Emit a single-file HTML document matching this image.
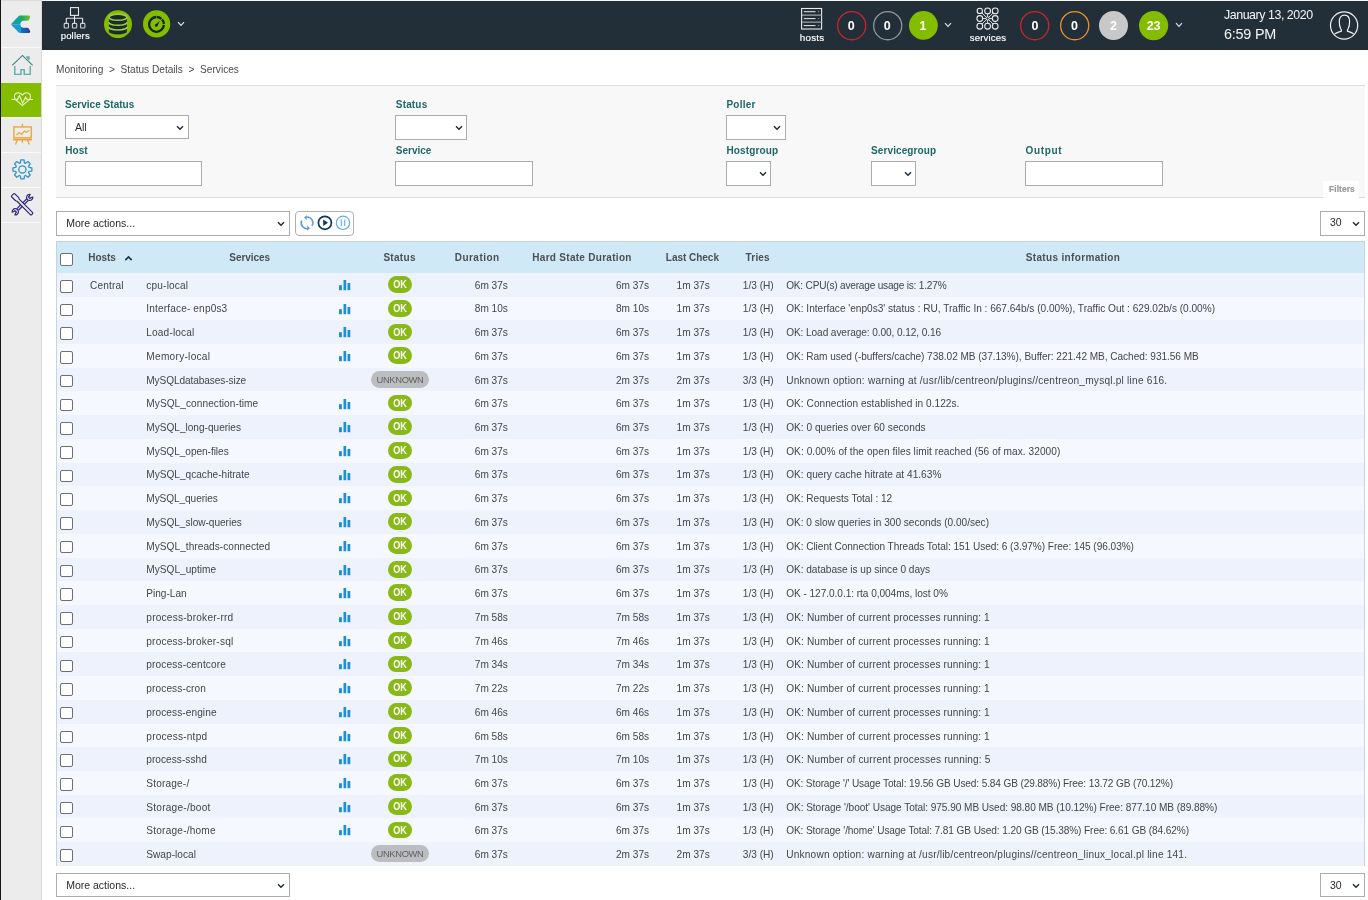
<!DOCTYPE html><html><head><meta charset="utf-8"><style>
html,body{margin:0;padding:0;width:1368px;height:900px;overflow:hidden;background:#fff;font-family:"Liberation Sans", sans-serif;}
.t{position:absolute;white-space:pre;line-height:1;}
.b{position:absolute;}
#tl{position:absolute;left:0;top:0;width:1368px;height:900px;will-change:transform;}
</style></head><body>
<div class="b" style="left:0.00px;top:0.00px;width:1.00px;height:900.00px;background:#161616;"></div>
<div class="b" style="left:1.00px;top:0.00px;width:40.00px;height:900.00px;background:#ececec;"></div>
<div class="b" style="left:41.00px;top:0.00px;width:1.00px;height:900.00px;background:#dadada;"></div>
<div class="b" style="left:1.00px;top:0.00px;width:40.00px;height:1.00px;background:#dcdcdc;"></div>
<div class="b" style="left:2.00px;top:47.00px;width:39.00px;height:1.00px;background:#fafafa;"></div>
<div class="b" style="left:2.00px;top:82.50px;width:39.00px;height:1.00px;background:#fafafa;"></div>
<div class="b" style="left:2.00px;top:117.00px;width:39.00px;height:1.00px;background:#fafafa;"></div>
<div class="b" style="left:2.00px;top:152.30px;width:39.00px;height:1.00px;background:#fafafa;"></div>
<div class="b" style="left:2.00px;top:187.30px;width:39.00px;height:1.00px;background:#fafafa;"></div>
<div class="b" style="left:2.00px;top:222.30px;width:39.00px;height:1.00px;background:#fafafa;"></div>
<div class="b" style="left:1.00px;top:83.00px;width:40.00px;height:33.80px;background:#84bd00;"></div>
<div class="b" style="left:42.00px;top:0.00px;width:1326.00px;height:1.00px;background:#f4f6f8;"></div>
<div class="b" style="left:42.00px;top:1.00px;width:1326.00px;height:49.00px;background:#232f38;"></div>
<div class="b" style="left:56.00px;top:85.00px;width:1309.00px;height:113.00px;background:#f8f8f8;border-top:1px solid #dcdcdc;border-bottom:1px solid #dcdcdc;box-sizing:border-box;"></div>
<div class="b" style="left:65.30px;top:115.20px;width:123.30px;height:24.30px;background:#fff;border:1px solid #acacac;box-sizing:border-box;"></div>
<svg class="b" style="left:176.30px;top:124.65px" width="8" height="6" viewBox="0 0 8 6"><path d="M1 1.2 L4 4.3 L7 1.2" fill="none" stroke="#1d2a44" stroke-width="1.4"/></svg>
<div class="b" style="left:395.10px;top:115.00px;width:71.70px;height:24.70px;background:#fff;border:1px solid #acacac;box-sizing:border-box;"></div>
<svg class="b" style="left:454.50px;top:124.65px" width="8" height="6" viewBox="0 0 8 6"><path d="M1 1.2 L4 4.3 L7 1.2" fill="none" stroke="#1d2a44" stroke-width="1.4"/></svg>
<div class="b" style="left:726.00px;top:115.10px;width:59.70px;height:24.50px;background:#fff;border:1px solid #acacac;box-sizing:border-box;"></div>
<svg class="b" style="left:773.40px;top:124.65px" width="8" height="6" viewBox="0 0 8 6"><path d="M1 1.2 L4 4.3 L7 1.2" fill="none" stroke="#1d2a44" stroke-width="1.4"/></svg>
<div class="b" style="left:65.30px;top:161.20px;width:136.40px;height:24.40px;background:#fff;border:1px solid #acacac;box-sizing:border-box;"></div>
<div class="b" style="left:395.10px;top:161.00px;width:137.80px;height:24.70px;background:#fff;border:1px solid #acacac;box-sizing:border-box;"></div>
<div class="b" style="left:726.00px;top:161.00px;width:44.80px;height:24.60px;background:#fff;border:1px solid #acacac;box-sizing:border-box;"></div>
<svg class="b" style="left:758.50px;top:170.60px" width="8" height="6" viewBox="0 0 8 6"><path d="M1 1.2 L4 4.3 L7 1.2" fill="none" stroke="#1d2a44" stroke-width="1.4"/></svg>
<div class="b" style="left:871.10px;top:161.00px;width:44.80px;height:24.60px;background:#fff;border:1px solid #acacac;box-sizing:border-box;"></div>
<svg class="b" style="left:903.60px;top:170.60px" width="8" height="6" viewBox="0 0 8 6"><path d="M1 1.2 L4 4.3 L7 1.2" fill="none" stroke="#1d2a44" stroke-width="1.4"/></svg>
<div class="b" style="left:1025.20px;top:161.10px;width:137.70px;height:24.60px;background:#fff;border:1px solid #acacac;box-sizing:border-box;"></div>
<div class="b" style="left:1323.00px;top:181.00px;width:36.00px;height:17.00px;background:#fff;"></div>
<div class="b" style="left:56.00px;top:211.00px;width:233.60px;height:24.60px;background:#fff;border:1px solid #acacac;box-sizing:border-box;"></div>
<svg class="b" style="left:277.30px;top:220.60px" width="8" height="6" viewBox="0 0 8 6"><path d="M1 1.2 L4 4.3 L7 1.2" fill="none" stroke="#1d2a44" stroke-width="1.4"/></svg>
<div class="b" style="left:295.30px;top:211.25px;width:58.45px;height:24.35px;background:#fff;border:1px solid #b0b0b0;border-radius:4px;box-sizing:border-box;"></div>
<div class="b" style="left:1320.30px;top:211.30px;width:44.40px;height:24.40px;background:#fff;border:1px solid #acacac;box-sizing:border-box;"></div>
<svg class="b" style="left:1352.40px;top:220.80px" width="8" height="6" viewBox="0 0 8 6"><path d="M1 1.2 L4 4.3 L7 1.2" fill="none" stroke="#1d2a44" stroke-width="1.4"/></svg>
<div class="b" style="left:56.00px;top:241.20px;width:1308.70px;height:625.10px;border:1px solid #c9d3dc;box-sizing:border-box;background:#f6f8fd;"></div>
<div class="b" style="left:57.00px;top:242.20px;width:1306.70px;height:30.70px;background:#cfeaf6;"></div>
<div class="b" style="left:60.20px;top:253.00px;width:13.00px;height:12.50px;background:#fff;border:1px solid #6f6f6f;border-radius:2px;box-sizing:border-box;"></div>
<svg class="b" style="left:123.5px;top:254.5px" width="9" height="7" viewBox="0 0 9 7"><path d="M1.3 5.2 L4.5 2 L7.7 5.2" fill="none" stroke="#1d3550" stroke-width="1.7"/></svg>
<div class="b" style="left:57.00px;top:272.90px;width:1306.70px;height:23.72px;background:#edf2fc;"></div>
<div class="b" style="left:60.20px;top:280.00px;width:13.00px;height:12.50px;background:#fff;border:1px solid #6f6f6f;border-radius:2px;box-sizing:border-box;"></div>
<svg class="b" style="left:338.8px;top:279.90px" width="12" height="11" viewBox="0 0 12 11"><rect x="0" y="5.2" width="2.9" height="5" fill="#1e8fd2"/><rect x="4.5" y="0" width="2.7" height="10.2" fill="#1e8fd2"/><rect x="8.5" y="3" width="2.8" height="7.2" fill="#1e8fd2"/></svg>
<div class="b" style="left:387.90px;top:276.10px;width:24.10px;height:16.80px;background:#88b917;border-radius:9px;"></div>
<div class="b" style="left:57.00px;top:296.62px;width:1306.70px;height:23.72px;background:#f5f8fe;"></div>
<div class="b" style="left:60.20px;top:303.72px;width:13.00px;height:12.50px;background:#fff;border:1px solid #6f6f6f;border-radius:2px;box-sizing:border-box;"></div>
<svg class="b" style="left:338.8px;top:303.62px" width="12" height="11" viewBox="0 0 12 11"><rect x="0" y="5.2" width="2.9" height="5" fill="#1e8fd2"/><rect x="4.5" y="0" width="2.7" height="10.2" fill="#1e8fd2"/><rect x="8.5" y="3" width="2.8" height="7.2" fill="#1e8fd2"/></svg>
<div class="b" style="left:387.90px;top:299.82px;width:24.10px;height:16.80px;background:#88b917;border-radius:9px;"></div>
<div class="b" style="left:57.00px;top:320.34px;width:1306.70px;height:23.72px;background:#edf2fc;"></div>
<div class="b" style="left:60.20px;top:327.44px;width:13.00px;height:12.50px;background:#fff;border:1px solid #6f6f6f;border-radius:2px;box-sizing:border-box;"></div>
<svg class="b" style="left:338.8px;top:327.34px" width="12" height="11" viewBox="0 0 12 11"><rect x="0" y="5.2" width="2.9" height="5" fill="#1e8fd2"/><rect x="4.5" y="0" width="2.7" height="10.2" fill="#1e8fd2"/><rect x="8.5" y="3" width="2.8" height="7.2" fill="#1e8fd2"/></svg>
<div class="b" style="left:387.90px;top:323.54px;width:24.10px;height:16.80px;background:#88b917;border-radius:9px;"></div>
<div class="b" style="left:57.00px;top:344.06px;width:1306.70px;height:23.72px;background:#f5f8fe;"></div>
<div class="b" style="left:60.20px;top:351.16px;width:13.00px;height:12.50px;background:#fff;border:1px solid #6f6f6f;border-radius:2px;box-sizing:border-box;"></div>
<svg class="b" style="left:338.8px;top:351.06px" width="12" height="11" viewBox="0 0 12 11"><rect x="0" y="5.2" width="2.9" height="5" fill="#1e8fd2"/><rect x="4.5" y="0" width="2.7" height="10.2" fill="#1e8fd2"/><rect x="8.5" y="3" width="2.8" height="7.2" fill="#1e8fd2"/></svg>
<div class="b" style="left:387.90px;top:347.26px;width:24.10px;height:16.80px;background:#88b917;border-radius:9px;"></div>
<div class="b" style="left:57.00px;top:367.78px;width:1306.70px;height:23.72px;background:#edf2fc;"></div>
<div class="b" style="left:60.20px;top:374.88px;width:13.00px;height:12.50px;background:#fff;border:1px solid #6f6f6f;border-radius:2px;box-sizing:border-box;"></div>
<div class="b" style="left:370.80px;top:370.98px;width:58.10px;height:16.80px;background:#bcbdc0;border-radius:9px;"></div>
<div class="b" style="left:57.00px;top:391.50px;width:1306.70px;height:23.72px;background:#f5f8fe;"></div>
<div class="b" style="left:60.20px;top:398.60px;width:13.00px;height:12.50px;background:#fff;border:1px solid #6f6f6f;border-radius:2px;box-sizing:border-box;"></div>
<svg class="b" style="left:338.8px;top:398.50px" width="12" height="11" viewBox="0 0 12 11"><rect x="0" y="5.2" width="2.9" height="5" fill="#1e8fd2"/><rect x="4.5" y="0" width="2.7" height="10.2" fill="#1e8fd2"/><rect x="8.5" y="3" width="2.8" height="7.2" fill="#1e8fd2"/></svg>
<div class="b" style="left:387.90px;top:394.70px;width:24.10px;height:16.80px;background:#88b917;border-radius:9px;"></div>
<div class="b" style="left:57.00px;top:415.22px;width:1306.70px;height:23.72px;background:#edf2fc;"></div>
<div class="b" style="left:60.20px;top:422.32px;width:13.00px;height:12.50px;background:#fff;border:1px solid #6f6f6f;border-radius:2px;box-sizing:border-box;"></div>
<svg class="b" style="left:338.8px;top:422.22px" width="12" height="11" viewBox="0 0 12 11"><rect x="0" y="5.2" width="2.9" height="5" fill="#1e8fd2"/><rect x="4.5" y="0" width="2.7" height="10.2" fill="#1e8fd2"/><rect x="8.5" y="3" width="2.8" height="7.2" fill="#1e8fd2"/></svg>
<div class="b" style="left:387.90px;top:418.42px;width:24.10px;height:16.80px;background:#88b917;border-radius:9px;"></div>
<div class="b" style="left:57.00px;top:438.94px;width:1306.70px;height:23.72px;background:#f5f8fe;"></div>
<div class="b" style="left:60.20px;top:446.04px;width:13.00px;height:12.50px;background:#fff;border:1px solid #6f6f6f;border-radius:2px;box-sizing:border-box;"></div>
<svg class="b" style="left:338.8px;top:445.94px" width="12" height="11" viewBox="0 0 12 11"><rect x="0" y="5.2" width="2.9" height="5" fill="#1e8fd2"/><rect x="4.5" y="0" width="2.7" height="10.2" fill="#1e8fd2"/><rect x="8.5" y="3" width="2.8" height="7.2" fill="#1e8fd2"/></svg>
<div class="b" style="left:387.90px;top:442.14px;width:24.10px;height:16.80px;background:#88b917;border-radius:9px;"></div>
<div class="b" style="left:57.00px;top:462.66px;width:1306.70px;height:23.72px;background:#edf2fc;"></div>
<div class="b" style="left:60.20px;top:469.76px;width:13.00px;height:12.50px;background:#fff;border:1px solid #6f6f6f;border-radius:2px;box-sizing:border-box;"></div>
<svg class="b" style="left:338.8px;top:469.66px" width="12" height="11" viewBox="0 0 12 11"><rect x="0" y="5.2" width="2.9" height="5" fill="#1e8fd2"/><rect x="4.5" y="0" width="2.7" height="10.2" fill="#1e8fd2"/><rect x="8.5" y="3" width="2.8" height="7.2" fill="#1e8fd2"/></svg>
<div class="b" style="left:387.90px;top:465.86px;width:24.10px;height:16.80px;background:#88b917;border-radius:9px;"></div>
<div class="b" style="left:57.00px;top:486.38px;width:1306.70px;height:23.72px;background:#f5f8fe;"></div>
<div class="b" style="left:60.20px;top:493.48px;width:13.00px;height:12.50px;background:#fff;border:1px solid #6f6f6f;border-radius:2px;box-sizing:border-box;"></div>
<svg class="b" style="left:338.8px;top:493.38px" width="12" height="11" viewBox="0 0 12 11"><rect x="0" y="5.2" width="2.9" height="5" fill="#1e8fd2"/><rect x="4.5" y="0" width="2.7" height="10.2" fill="#1e8fd2"/><rect x="8.5" y="3" width="2.8" height="7.2" fill="#1e8fd2"/></svg>
<div class="b" style="left:387.90px;top:489.58px;width:24.10px;height:16.80px;background:#88b917;border-radius:9px;"></div>
<div class="b" style="left:57.00px;top:510.10px;width:1306.70px;height:23.72px;background:#edf2fc;"></div>
<div class="b" style="left:60.20px;top:517.20px;width:13.00px;height:12.50px;background:#fff;border:1px solid #6f6f6f;border-radius:2px;box-sizing:border-box;"></div>
<svg class="b" style="left:338.8px;top:517.10px" width="12" height="11" viewBox="0 0 12 11"><rect x="0" y="5.2" width="2.9" height="5" fill="#1e8fd2"/><rect x="4.5" y="0" width="2.7" height="10.2" fill="#1e8fd2"/><rect x="8.5" y="3" width="2.8" height="7.2" fill="#1e8fd2"/></svg>
<div class="b" style="left:387.90px;top:513.30px;width:24.10px;height:16.80px;background:#88b917;border-radius:9px;"></div>
<div class="b" style="left:57.00px;top:533.82px;width:1306.70px;height:23.72px;background:#f5f8fe;"></div>
<div class="b" style="left:60.20px;top:540.92px;width:13.00px;height:12.50px;background:#fff;border:1px solid #6f6f6f;border-radius:2px;box-sizing:border-box;"></div>
<svg class="b" style="left:338.8px;top:540.82px" width="12" height="11" viewBox="0 0 12 11"><rect x="0" y="5.2" width="2.9" height="5" fill="#1e8fd2"/><rect x="4.5" y="0" width="2.7" height="10.2" fill="#1e8fd2"/><rect x="8.5" y="3" width="2.8" height="7.2" fill="#1e8fd2"/></svg>
<div class="b" style="left:387.90px;top:537.02px;width:24.10px;height:16.80px;background:#88b917;border-radius:9px;"></div>
<div class="b" style="left:57.00px;top:557.54px;width:1306.70px;height:23.72px;background:#edf2fc;"></div>
<div class="b" style="left:60.20px;top:564.64px;width:13.00px;height:12.50px;background:#fff;border:1px solid #6f6f6f;border-radius:2px;box-sizing:border-box;"></div>
<svg class="b" style="left:338.8px;top:564.54px" width="12" height="11" viewBox="0 0 12 11"><rect x="0" y="5.2" width="2.9" height="5" fill="#1e8fd2"/><rect x="4.5" y="0" width="2.7" height="10.2" fill="#1e8fd2"/><rect x="8.5" y="3" width="2.8" height="7.2" fill="#1e8fd2"/></svg>
<div class="b" style="left:387.90px;top:560.74px;width:24.10px;height:16.80px;background:#88b917;border-radius:9px;"></div>
<div class="b" style="left:57.00px;top:581.26px;width:1306.70px;height:23.72px;background:#f5f8fe;"></div>
<div class="b" style="left:60.20px;top:588.36px;width:13.00px;height:12.50px;background:#fff;border:1px solid #6f6f6f;border-radius:2px;box-sizing:border-box;"></div>
<svg class="b" style="left:338.8px;top:588.26px" width="12" height="11" viewBox="0 0 12 11"><rect x="0" y="5.2" width="2.9" height="5" fill="#1e8fd2"/><rect x="4.5" y="0" width="2.7" height="10.2" fill="#1e8fd2"/><rect x="8.5" y="3" width="2.8" height="7.2" fill="#1e8fd2"/></svg>
<div class="b" style="left:387.90px;top:584.46px;width:24.10px;height:16.80px;background:#88b917;border-radius:9px;"></div>
<div class="b" style="left:57.00px;top:604.98px;width:1306.70px;height:23.72px;background:#edf2fc;"></div>
<div class="b" style="left:60.20px;top:612.08px;width:13.00px;height:12.50px;background:#fff;border:1px solid #6f6f6f;border-radius:2px;box-sizing:border-box;"></div>
<svg class="b" style="left:338.8px;top:611.98px" width="12" height="11" viewBox="0 0 12 11"><rect x="0" y="5.2" width="2.9" height="5" fill="#1e8fd2"/><rect x="4.5" y="0" width="2.7" height="10.2" fill="#1e8fd2"/><rect x="8.5" y="3" width="2.8" height="7.2" fill="#1e8fd2"/></svg>
<div class="b" style="left:387.90px;top:608.18px;width:24.10px;height:16.80px;background:#88b917;border-radius:9px;"></div>
<div class="b" style="left:57.00px;top:628.70px;width:1306.70px;height:23.72px;background:#f5f8fe;"></div>
<div class="b" style="left:60.20px;top:635.80px;width:13.00px;height:12.50px;background:#fff;border:1px solid #6f6f6f;border-radius:2px;box-sizing:border-box;"></div>
<svg class="b" style="left:338.8px;top:635.70px" width="12" height="11" viewBox="0 0 12 11"><rect x="0" y="5.2" width="2.9" height="5" fill="#1e8fd2"/><rect x="4.5" y="0" width="2.7" height="10.2" fill="#1e8fd2"/><rect x="8.5" y="3" width="2.8" height="7.2" fill="#1e8fd2"/></svg>
<div class="b" style="left:387.90px;top:631.90px;width:24.10px;height:16.80px;background:#88b917;border-radius:9px;"></div>
<div class="b" style="left:57.00px;top:652.42px;width:1306.70px;height:23.72px;background:#edf2fc;"></div>
<div class="b" style="left:60.20px;top:659.52px;width:13.00px;height:12.50px;background:#fff;border:1px solid #6f6f6f;border-radius:2px;box-sizing:border-box;"></div>
<svg class="b" style="left:338.8px;top:659.42px" width="12" height="11" viewBox="0 0 12 11"><rect x="0" y="5.2" width="2.9" height="5" fill="#1e8fd2"/><rect x="4.5" y="0" width="2.7" height="10.2" fill="#1e8fd2"/><rect x="8.5" y="3" width="2.8" height="7.2" fill="#1e8fd2"/></svg>
<div class="b" style="left:387.90px;top:655.62px;width:24.10px;height:16.80px;background:#88b917;border-radius:9px;"></div>
<div class="b" style="left:57.00px;top:676.14px;width:1306.70px;height:23.72px;background:#f5f8fe;"></div>
<div class="b" style="left:60.20px;top:683.24px;width:13.00px;height:12.50px;background:#fff;border:1px solid #6f6f6f;border-radius:2px;box-sizing:border-box;"></div>
<svg class="b" style="left:338.8px;top:683.14px" width="12" height="11" viewBox="0 0 12 11"><rect x="0" y="5.2" width="2.9" height="5" fill="#1e8fd2"/><rect x="4.5" y="0" width="2.7" height="10.2" fill="#1e8fd2"/><rect x="8.5" y="3" width="2.8" height="7.2" fill="#1e8fd2"/></svg>
<div class="b" style="left:387.90px;top:679.34px;width:24.10px;height:16.80px;background:#88b917;border-radius:9px;"></div>
<div class="b" style="left:57.00px;top:699.86px;width:1306.70px;height:23.72px;background:#edf2fc;"></div>
<div class="b" style="left:60.20px;top:706.96px;width:13.00px;height:12.50px;background:#fff;border:1px solid #6f6f6f;border-radius:2px;box-sizing:border-box;"></div>
<svg class="b" style="left:338.8px;top:706.86px" width="12" height="11" viewBox="0 0 12 11"><rect x="0" y="5.2" width="2.9" height="5" fill="#1e8fd2"/><rect x="4.5" y="0" width="2.7" height="10.2" fill="#1e8fd2"/><rect x="8.5" y="3" width="2.8" height="7.2" fill="#1e8fd2"/></svg>
<div class="b" style="left:387.90px;top:703.06px;width:24.10px;height:16.80px;background:#88b917;border-radius:9px;"></div>
<div class="b" style="left:57.00px;top:723.58px;width:1306.70px;height:23.72px;background:#f5f8fe;"></div>
<div class="b" style="left:60.20px;top:730.68px;width:13.00px;height:12.50px;background:#fff;border:1px solid #6f6f6f;border-radius:2px;box-sizing:border-box;"></div>
<svg class="b" style="left:338.8px;top:730.58px" width="12" height="11" viewBox="0 0 12 11"><rect x="0" y="5.2" width="2.9" height="5" fill="#1e8fd2"/><rect x="4.5" y="0" width="2.7" height="10.2" fill="#1e8fd2"/><rect x="8.5" y="3" width="2.8" height="7.2" fill="#1e8fd2"/></svg>
<div class="b" style="left:387.90px;top:726.78px;width:24.10px;height:16.80px;background:#88b917;border-radius:9px;"></div>
<div class="b" style="left:57.00px;top:747.30px;width:1306.70px;height:23.72px;background:#edf2fc;"></div>
<div class="b" style="left:60.20px;top:754.40px;width:13.00px;height:12.50px;background:#fff;border:1px solid #6f6f6f;border-radius:2px;box-sizing:border-box;"></div>
<svg class="b" style="left:338.8px;top:754.30px" width="12" height="11" viewBox="0 0 12 11"><rect x="0" y="5.2" width="2.9" height="5" fill="#1e8fd2"/><rect x="4.5" y="0" width="2.7" height="10.2" fill="#1e8fd2"/><rect x="8.5" y="3" width="2.8" height="7.2" fill="#1e8fd2"/></svg>
<div class="b" style="left:387.90px;top:750.50px;width:24.10px;height:16.80px;background:#88b917;border-radius:9px;"></div>
<div class="b" style="left:57.00px;top:771.02px;width:1306.70px;height:23.72px;background:#f5f8fe;"></div>
<div class="b" style="left:60.20px;top:778.12px;width:13.00px;height:12.50px;background:#fff;border:1px solid #6f6f6f;border-radius:2px;box-sizing:border-box;"></div>
<svg class="b" style="left:338.8px;top:778.02px" width="12" height="11" viewBox="0 0 12 11"><rect x="0" y="5.2" width="2.9" height="5" fill="#1e8fd2"/><rect x="4.5" y="0" width="2.7" height="10.2" fill="#1e8fd2"/><rect x="8.5" y="3" width="2.8" height="7.2" fill="#1e8fd2"/></svg>
<div class="b" style="left:387.90px;top:774.22px;width:24.10px;height:16.80px;background:#88b917;border-radius:9px;"></div>
<div class="b" style="left:57.00px;top:794.74px;width:1306.70px;height:23.72px;background:#edf2fc;"></div>
<div class="b" style="left:60.20px;top:801.84px;width:13.00px;height:12.50px;background:#fff;border:1px solid #6f6f6f;border-radius:2px;box-sizing:border-box;"></div>
<svg class="b" style="left:338.8px;top:801.74px" width="12" height="11" viewBox="0 0 12 11"><rect x="0" y="5.2" width="2.9" height="5" fill="#1e8fd2"/><rect x="4.5" y="0" width="2.7" height="10.2" fill="#1e8fd2"/><rect x="8.5" y="3" width="2.8" height="7.2" fill="#1e8fd2"/></svg>
<div class="b" style="left:387.90px;top:797.94px;width:24.10px;height:16.80px;background:#88b917;border-radius:9px;"></div>
<div class="b" style="left:57.00px;top:818.46px;width:1306.70px;height:23.72px;background:#f5f8fe;"></div>
<div class="b" style="left:60.20px;top:825.56px;width:13.00px;height:12.50px;background:#fff;border:1px solid #6f6f6f;border-radius:2px;box-sizing:border-box;"></div>
<svg class="b" style="left:338.8px;top:825.46px" width="12" height="11" viewBox="0 0 12 11"><rect x="0" y="5.2" width="2.9" height="5" fill="#1e8fd2"/><rect x="4.5" y="0" width="2.7" height="10.2" fill="#1e8fd2"/><rect x="8.5" y="3" width="2.8" height="7.2" fill="#1e8fd2"/></svg>
<div class="b" style="left:387.90px;top:821.66px;width:24.10px;height:16.80px;background:#88b917;border-radius:9px;"></div>
<div class="b" style="left:57.00px;top:842.18px;width:1306.70px;height:23.72px;background:#edf2fc;"></div>
<div class="b" style="left:60.20px;top:849.28px;width:13.00px;height:12.50px;background:#fff;border:1px solid #6f6f6f;border-radius:2px;box-sizing:border-box;"></div>
<div class="b" style="left:370.80px;top:845.38px;width:58.10px;height:16.80px;background:#bcbdc0;border-radius:9px;"></div>
<div class="b" style="left:56.00px;top:873.30px;width:233.60px;height:24.20px;background:#fff;border:1px solid #acacac;box-sizing:border-box;"></div>
<svg class="b" style="left:277.30px;top:882.70px" width="8" height="6" viewBox="0 0 8 6"><path d="M1 1.2 L4 4.3 L7 1.2" fill="none" stroke="#1d2a44" stroke-width="1.4"/></svg>
<div class="b" style="left:1320.30px;top:873.30px;width:44.40px;height:24.20px;background:#fff;border:1px solid #acacac;box-sizing:border-box;"></div>
<svg class="b" style="left:1352.40px;top:882.70px" width="8" height="6" viewBox="0 0 8 6"><path d="M1 1.2 L4 4.3 L7 1.2" fill="none" stroke="#1d2a44" stroke-width="1.4"/></svg>
<svg class="b" style="left:60px;top:4px" width="30" height="28" viewBox="60 4 30 28">
<rect x="70.5" y="7.6" width="8" height="7.8" fill="none" stroke="#e6e8ea" stroke-width="1.1"/>
<path d="M74.5 15.4 V18.3 M66.3 18.3 H82.6 M66.3 18.3 V23.2 M74.5 18.3 V23.2 M82.6 18.3 V23.2" fill="none" stroke="#e6e8ea" stroke-width="1.1"/>
<rect x="64.2" y="23.4" width="4.3" height="4.6" rx="0.8" fill="none" stroke="#cfd3d6" stroke-width="1.1"/>
<rect x="72.4" y="23.4" width="4.3" height="4.6" rx="0.8" fill="none" stroke="#cfd3d6" stroke-width="1.1"/>
<rect x="80.6" y="23.4" width="4.3" height="4.6" rx="0.8" fill="none" stroke="#cfd3d6" stroke-width="1.1"/>
</svg>
<svg class="b" style="left:104px;top:9.6px" width="28" height="28.6" viewBox="0 0 28 28.6">
<circle cx="14" cy="14.2" r="14" fill="#84bd00"/>
<path d="M4.9 7.3 V21.4 A9 3 0 0 0 22.9 21.4 V7.3 Z" fill="#1b2a2c"/>
<ellipse cx="13.9" cy="7.3" rx="9" ry="3" fill="#1b2a2c" stroke="#9fcd45" stroke-width="1.5"/>
<path d="M4.9 12.3 A9 3 0 0 0 22.9 12.3 M4.9 16.9 A9 3 0 0 0 22.9 16.9" fill="none" stroke="#9fcd45" stroke-width="1.5"/>
</svg>
<svg class="b" style="left:143px;top:10px" width="28" height="28" viewBox="0 0 28 28">
<circle cx="13.6" cy="13.9" r="13.6" fill="#84bd00"/>
<circle cx="13.5" cy="14.4" r="7.4" fill="none" stroke="#13241a" stroke-width="2.3" stroke-dasharray="4.91 0.9 4.91 0.9 33.97 0.9" transform="rotate(-86.5 13.5 14.4)"/>
<path d="M12.1 14.9 L16.9 10.8 L14.2 16.4 Z" fill="#13241a"/>
<circle cx="13.1" cy="15.6" r="1.25" fill="#13241a"/>
</svg>
<svg class="b" style="left:800px;top:7px" width="24" height="24" viewBox="800 7 24 24">
<rect x="801.6" y="8.5" width="20" height="20.5" fill="none" stroke="#e8eaec" stroke-width="1.1"/>
<path d="M802 15.2 H821.6 M802 22.1 H821.6" stroke="#9aa0a5" stroke-width="1.3"/>
<path d="M803.8 11.7 H815.5 M803.8 18.6 H815.5 M803.8 25.6 H815.5" stroke="#e8eaec" stroke-width="1"/>
<path d="M818.2 11.7 H819.2 M818.2 18.6 H819.2 M818.2 25.6 H819.2" stroke="#b0b4b8" stroke-width="1"/>
</svg>
<svg class="b" style="left:974px;top:6px" width="26" height="25" viewBox="974 6 26 25"><circle cx="979.8" cy="10.9" r="2.65" fill="none" stroke="#eceef0" stroke-width="1.05"/><path d="M986.45 17.38 L981.88 12.92" stroke="#eceef0" stroke-width="0.9"/><circle cx="987.6" cy="10.9" r="2.9" fill="none" stroke="#eceef0" stroke-width="1.05"/><path d="M987.60 16.90 L987.60 13.80" stroke="#eceef0" stroke-width="0.9"/><circle cx="995.2" cy="10.9" r="2.9" fill="none" stroke="#eceef0" stroke-width="1.05"/><path d="M988.73 17.37 L993.15 12.95" stroke="#eceef0" stroke-width="0.9"/><circle cx="979.8" cy="18.5" r="2.9" fill="none" stroke="#eceef0" stroke-width="1.05"/><path d="M986.00 18.50 L982.70 18.50" stroke="#eceef0" stroke-width="0.9"/><circle cx="995.2" cy="18.5" r="2.9" fill="none" stroke="#eceef0" stroke-width="1.05"/><path d="M989.20 18.50 L992.30 18.50" stroke="#eceef0" stroke-width="0.9"/><circle cx="979.8" cy="26.2" r="2.9" fill="none" stroke="#eceef0" stroke-width="1.05"/><path d="M986.46 19.62 L981.86 24.16" stroke="#eceef0" stroke-width="0.9"/><circle cx="987.6" cy="26.2" r="2.9" fill="none" stroke="#eceef0" stroke-width="1.05"/><path d="M987.60 20.10 L987.60 23.30" stroke="#eceef0" stroke-width="0.9"/><circle cx="995.2" cy="26.2" r="2.9" fill="none" stroke="#eceef0" stroke-width="1.05"/><path d="M988.72 19.64 L993.16 24.14" stroke="#eceef0" stroke-width="0.9"/><circle cx="987.6" cy="18.5" r="1.6" fill="none" stroke="#eceef0" stroke-width="1"/></svg>
<svg class="b" style="left:1328px;top:9px" width="32" height="33" viewBox="1328 9 32 33">
<circle cx="1344.1" cy="25.5" r="13.6" fill="none" stroke="#eef0f2" stroke-width="1.2"/>
<path d="M1334.6 33.9 C1336.6 32.6 1339.2 31.9 1341.4 31.1 C1341.6 30.2 1341.2 29.4 1340.6 28.6 C1339.8 27 1339.3 25 1339.3 21.5 C1339.3 17.4 1341.2 15.2 1344.4 15.2 C1347.6 15.2 1349.6 17.4 1349.6 21.5 C1349.6 25 1349 27 1348.2 28.6 C1347.6 29.4 1347.2 30.2 1347.4 31.1 C1349.6 31.9 1351.8 32.6 1353.7 33.9" fill="none" stroke="#eef0f2" stroke-width="1.2"/>
</svg>
<svg class="b" style="left:9px;top:13px" width="24" height="22" viewBox="9 13 24 22">
<defs>
<clipPath id="lc"><path d="M11.6 23.40 L18.0 16.80 Q18.8 15.60 20.2 15.60 L28.4 15.60 Q30.8 15.80 30.1 17.70 L28.8 20.10 Q28.2 20.90 26.9 20.80 L23.9 20.80 A3.5 3.5 0 1 0 23.9 27.80 L26.9 27.80 Q28.2 27.70 28.8 28.50 L30.1 30.90 Q30.8 32.80 28.4 33.00 L20.2 33.00 Q18.8 33.00 18.0 31.80 L11.6 25.20 Q10.9 24.3 11.6 23.40 Z"/></clipPath>
<linearGradient id="lg1" x1="0" y1="0" x2="1" y2="0"><stop offset="0" stop-color="#1fa650"/><stop offset="1" stop-color="#8dc63f"/></linearGradient>
<linearGradient id="lg2" x1="0" y1="0" x2="1" y2="0"><stop offset="0" stop-color="#0b78c4"/><stop offset="1" stop-color="#3b2b8e"/></linearGradient>
</defs>
<g clip-path="url(#lc)">
<rect x="9" y="13" width="12" height="11.3" fill="#0ea59c"/>
<rect x="21" y="13" width="12" height="11.3" fill="url(#lg1)"/>
<rect x="9" y="24.3" width="12" height="11" fill="#1a9bd8"/>
<rect x="21" y="24.3" width="12" height="11" fill="url(#lg2)"/>
</g>
</svg>
<svg class="b" style="left:10px;top:53px" width="24" height="24" viewBox="10 53 24 24">
<path d="M12.2 65.4 L22.5 55.4 L32.6 65.4" fill="none" stroke="#3f7f7d" stroke-width="1.1"/>
<path d="M26.3 56.3 H29.7 V59.8 L29 60.2 L26.3 57.8 Z" fill="#56b3a9"/>
<path d="M14.8 66 V74.4 H21 V69.6 H24.2 V74.4 H30.2 V66" fill="none" stroke="#55b0a8" stroke-width="1.4"/>
</svg>
<svg class="b" style="left:10px;top:90px" width="26" height="18" viewBox="10 90 26 18">
<path d="M15.6 99.6 C13.8 97.6 13.8 94.6 16.2 93.3 C18.6 92 20.8 93.3 22.4 95 C24 93.3 26.2 92 28.6 93.3 C31 94.6 31 97.6 29.2 99.6 L22.4 105.6 Z" fill="none" stroke="#e9f7cf" stroke-width="1.1"/>
<path d="M11.4 99.5 H15.8 L17.3 99.8 L19.5 95.6 L22.6 103.4 L25.6 97.2 L27.2 99.5 H33" fill="none" stroke="#e9f7cf" stroke-width="1.1"/>
</svg>
<svg class="b" style="left:11px;top:122px" width="23" height="24" viewBox="11 122 23 24">
<path d="M22.4 123.8 V126.6" stroke="#eaa53a" stroke-width="1.4"/>
<rect x="13.9" y="126.9" width="17.4" height="10.9" fill="none" stroke="#efab3f" stroke-width="1.5"/>
<path d="M13.2 139.6 H32" stroke="#e9a437" stroke-width="1.7"/>
<path d="M17.4 139.8 L15.5 144.4 M22.4 139.8 V142.8 M27.4 139.8 L29.3 144.4" stroke="#eaa53a" stroke-width="1.3"/>
<path d="M16.4 135.2 L19 132.6 L21.5 134.4 L24.4 131 L26.5 132.2 L29 130.6" fill="none" stroke="#e9a63b" stroke-width="1.2"/>
</svg>
<svg class="b" style="left:10px;top:157px" width="25" height="25" viewBox="10 157 25 25">
<path d="M20.36 162.81 L20.78 159.94 L24.02 159.94 L24.44 162.81 L25.62 163.30 L27.94 161.56 L30.24 163.86 L28.50 166.18 L28.99 167.36 L31.86 167.78 L31.86 171.02 L28.99 171.44 L28.50 172.62 L30.24 174.94 L27.94 177.24 L25.62 175.50 L24.44 175.99 L24.02 178.86 L20.78 178.86 L20.36 175.99 L19.18 175.50 L16.86 177.24 L14.56 174.94 L16.30 172.62 L15.81 171.44 L12.94 171.02 L12.94 167.78 L15.81 167.36 L16.30 166.18 L14.56 163.86 L16.86 161.56 L19.18 163.30 Z" fill="none" stroke="#2f93d3" stroke-width="1.3" stroke-linejoin="round"/>
<circle cx="22.4" cy="169.4" r="3.6" fill="none" stroke="#2f93d3" stroke-width="1.3"/>
</svg>
<svg class="b" style="left:9px;top:191px" width="27" height="27" viewBox="9 191 27 27">
<g transform="translate(22.5 204.6) rotate(-45)" fill="none" stroke="#2e2a7c" stroke-width="1.2" stroke-linejoin="round">
<path d="M-7.2 -1.1 H7.2 M-7.2 1.1 H7.2"/>
<path d="M12.64 -1.91 L10.80 -1.1 L9.60 -1.1 L9.60 1.1 L10.80 1.1 L12.64 1.91 A3.1 3.1 0 1 1 12.64 -1.91 Z" fill="#ececec"/>
<g transform="scale(-1 1)"><path d="M12.64 -1.91 L10.80 -1.1 L9.60 -1.1 L9.60 1.1 L10.80 1.1 L12.64 1.91 A3.1 3.1 0 1 1 12.64 -1.91 Z" fill="#ececec"/></g>
</g>
<g transform="translate(22.5 204.6) rotate(45)" fill="#ececec" stroke="#2e2a7c" stroke-width="1.2" stroke-linejoin="round">
<path d="M-13 -2.2 C-13.6 -2.2 -14 -1.6 -14 -0.9 V0.9 C-14 1.6 -13.6 2.2 -13 2.2 H-7.6 L-6.2 1.5 H12.6 C13.2 1.5 13.6 1.1 13.6 0.5 V-0.5 C13.6 -1.1 13.2 -1.5 12.6 -1.5 H-6.2 L-7.6 -2.2 Z"/>
</g>
</svg>
<svg class="b" style="left:298px;top:212px" width="56" height="22" viewBox="298 212 56 22">
<g transform="translate(298 212)">
<path d="M8.3 5.05 A5.8 5.8 0 0 1 13.97 13.84" fill="none" stroke="#639fd6" stroke-width="1.6"/>
<path d="M6.0 5.5 L8.8 2.9 L8.8 8.1 Z" fill="#639fd6"/>
<path d="M3.7 8.49 A5.8 5.8 0 0 0 9.7 16.65" fill="none" stroke="#639fd6" stroke-width="1.6"/>
<path d="M12.0 16.2 L9.2 13.6 L9.2 18.8 Z" fill="#639fd6"/>
</g>
<circle cx="324.9" cy="222.8" r="6.5" fill="none" stroke="#0d3a5c" stroke-width="1.7"/>
<path d="M323.2 219.5 V226.1 L328 222.8 Z" fill="#0d3a5c"/>
<circle cx="343" cy="222.8" r="6.7" fill="none" stroke="#62b0e6" stroke-width="1.2"/>
<path d="M341.3 219.5 V226 M344.7 219.5 V226" stroke="#62b0e6" stroke-width="1.1"/>
</svg>
<svg class="b" style="left:835.60px;top:9.60px" width="31.40" height="31.40"><circle cx="15.70" cy="15.70" r="14.05" fill="none" stroke="#c9252c" stroke-width="1.3"/></svg>
<svg class="b" style="left:871.60px;top:9.60px" width="31.40" height="31.40"><circle cx="15.70" cy="15.70" r="14.05" fill="none" stroke="#8f959b" stroke-width="1.3"/></svg>
<svg class="b" style="left:907.60px;top:9.90px" width="30.80" height="30.80"><circle cx="15.40" cy="15.40" r="14.40" fill="#84bd00" stroke="none" stroke-width="1.3"/></svg>
<svg class="b" style="left:943.50px;top:21.50px" width="8" height="6" viewBox="0 0 8 6"><path d="M1 1.2 L4 4.3 L7 1.2" fill="none" stroke="#dfe3e6" stroke-width="1.2"/></svg>
<svg class="b" style="left:1019.30px;top:9.60px" width="31.40" height="31.40"><circle cx="15.70" cy="15.70" r="14.05" fill="none" stroke="#c9252c" stroke-width="1.3"/></svg>
<svg class="b" style="left:1058.90px;top:9.60px" width="31.40" height="31.40"><circle cx="15.70" cy="15.70" r="14.05" fill="none" stroke="#e8902e" stroke-width="1.3"/></svg>
<svg class="b" style="left:1098.00px;top:9.80px" width="31.00" height="31.00"><circle cx="15.50" cy="15.50" r="14.50" fill="#c8c8c9" stroke="none" stroke-width="1.3"/></svg>
<svg class="b" style="left:1138.00px;top:9.70px" width="31.20" height="31.20"><circle cx="15.60" cy="15.60" r="14.60" fill="#84bd00" stroke="none" stroke-width="1.3"/></svg>
<svg class="b" style="left:1175.40px;top:21.50px" width="8" height="6" viewBox="0 0 8 6"><path d="M1 1.2 L4 4.3 L7 1.2" fill="none" stroke="#dfe3e6" stroke-width="1.2"/></svg>
<svg class="b" style="left:177.40px;top:21.30px" width="8" height="6" viewBox="0 0 8 6"><path d="M1 1.2 L4 4.3 L7 1.2" fill="none" stroke="#dfe3e6" stroke-width="1.2"/></svg>
<div id="tl">
<div class="t" style="left:56.00px;top:65.00px;font-size:10.1px;font-weight:normal;color:#4a4a4a;letter-spacing:0.014px;">Monitoring  &gt;  Status Details  &gt;  Services</div>
<div class="t" style="left:65.00px;top:100.00px;font-size:10px;font-weight:bold;color:#1e6866;letter-spacing:0.028px;">Service Status</div>
<div class="t" style="left:75.00px;top:122.00px;font-size:10.5px;font-weight:normal;color:#2a2a2a;">All</div>
<div class="t" style="left:395.80px;top:100.00px;font-size:10px;font-weight:bold;color:#1e6866;letter-spacing:0.167px;">Status</div>
<div class="t" style="left:726.40px;top:100.00px;font-size:10px;font-weight:bold;color:#1e6866;letter-spacing:0.241px;">Poller</div>
<div class="t" style="left:65.30px;top:146.00px;font-size:10px;font-weight:bold;color:#1e6866;">Host</div>
<div class="t" style="left:395.80px;top:146.00px;font-size:10px;font-weight:bold;color:#1e6866;">Service</div>
<div class="t" style="left:726.40px;top:146.00px;font-size:10px;font-weight:bold;color:#1e6866;letter-spacing:0.157px;">Hostgroup</div>
<div class="t" style="left:871.10px;top:146.00px;font-size:10px;font-weight:bold;color:#1e6866;letter-spacing:0.098px;">Servicegroup</div>
<div class="t" style="left:1025.50px;top:146.00px;font-size:10px;font-weight:bold;color:#1e6866;letter-spacing:0.667px;">Output</div>
<div class="t" style="left:1329.00px;top:185.00px;font-size:8.4px;font-weight:bold;color:#999999;letter-spacing:0.103px;-webkit-text-stroke:0.2px #999;">Filters</div>
<div class="t" style="left:66.20px;top:218.00px;font-size:10.5px;font-weight:normal;color:#2a2a2a;">More actions...</div>
<div class="t" style="left:1330.00px;top:217.00px;font-size:10.5px;font-weight:normal;color:#2a2a2a;">30</div>
<div class="t" style="left:88.30px;top:253.00px;font-size:10px;font-weight:bold;color:#4b4f54;letter-spacing:-0.049px;">Hosts</div>
<div class="t" style="left:-50.40px;width:600px;text-align:center;top:253.00px;font-size:10px;font-weight:bold;color:#4b4f54;letter-spacing:-0.065px;">Services</div>
<div class="t" style="left:99.60px;width:600px;text-align:center;top:253.00px;font-size:10px;font-weight:bold;color:#4b4f54;letter-spacing:0.307px;">Status</div>
<div class="t" style="left:177.20px;width:600px;text-align:center;top:253.00px;font-size:10px;font-weight:bold;color:#4b4f54;letter-spacing:0.484px;">Duration</div>
<div class="t" style="left:282.00px;width:600px;text-align:center;top:253.00px;font-size:10px;font-weight:bold;color:#4b4f54;letter-spacing:0.289px;">Hard State Duration</div>
<div class="t" style="left:392.40px;width:600px;text-align:center;top:253.00px;font-size:10px;font-weight:bold;color:#4b4f54;letter-spacing:-0.029px;">Last Check</div>
<div class="t" style="left:457.70px;width:600px;text-align:center;top:253.00px;font-size:10px;font-weight:bold;color:#4b4f54;letter-spacing:0.160px;">Tries</div>
<div class="t" style="left:773.00px;width:600px;text-align:center;top:253.00px;font-size:10px;font-weight:bold;color:#4b4f54;letter-spacing:0.344px;">Status information</div>
<div class="t" style="left:90.00px;top:281.00px;font-size:10.1px;font-weight:normal;color:#434549;letter-spacing:0.160px;">Central</div>
<div class="t" style="left:146.30px;top:281.00px;font-size:10.1px;font-weight:normal;color:#434549;letter-spacing:0.175px;">cpu-local</div>
<div class="t" style="left:100.00px;width:600px;text-align:center;top:280.00px;font-size:10.3px;font-weight:bold;color:#fff;transform:scaleX(0.88);transform-origin:50% 0;">OK</div>
<div class="t" style="left:474.80px;top:281.00px;font-size:10.1px;font-weight:normal;color:#434549;">6m 37s</div>
<div class="t" style="left:616.00px;top:281.00px;font-size:10.1px;font-weight:normal;color:#434549;">6m 37s</div>
<div class="t" style="left:676.60px;top:281.00px;font-size:10.1px;font-weight:normal;color:#434549;">1m 37s</div>
<div class="t" style="left:742.80px;top:281.00px;font-size:10.1px;font-weight:normal;color:#434549;">1/3 (H)</div>
<div class="t" style="left:786.20px;top:281.00px;font-size:10.1px;font-weight:normal;color:#434549;letter-spacing:-0.205px;">OK: CPU(s) average usage is: 1.27%</div>
<div class="t" style="left:146.30px;top:304.00px;font-size:10.1px;font-weight:normal;color:#434549;letter-spacing:0.147px;">Interface- enp0s3</div>
<div class="t" style="left:100.00px;width:600px;text-align:center;top:304.00px;font-size:10.3px;font-weight:bold;color:#fff;transform:scaleX(0.88);transform-origin:50% 0;">OK</div>
<div class="t" style="left:474.80px;top:304.00px;font-size:10.1px;font-weight:normal;color:#434549;">8m 10s</div>
<div class="t" style="left:616.00px;top:304.00px;font-size:10.1px;font-weight:normal;color:#434549;">8m 10s</div>
<div class="t" style="left:676.60px;top:304.00px;font-size:10.1px;font-weight:normal;color:#434549;">1m 37s</div>
<div class="t" style="left:742.80px;top:304.00px;font-size:10.1px;font-weight:normal;color:#434549;">1/3 (H)</div>
<div class="t" style="left:786.20px;top:304.00px;font-size:10.1px;font-weight:normal;color:#434549;letter-spacing:-0.011px;">OK: Interface &#x27;enp0s3&#x27; status : RU, Traffic In : 667.64b/s (0.00%), Traffic Out : 629.02b/s (0.00%)</div>
<div class="t" style="left:146.30px;top:328.00px;font-size:10.1px;font-weight:normal;color:#434549;letter-spacing:0.159px;">Load-local</div>
<div class="t" style="left:100.00px;width:600px;text-align:center;top:328.00px;font-size:10.3px;font-weight:bold;color:#fff;transform:scaleX(0.88);transform-origin:50% 0;">OK</div>
<div class="t" style="left:474.80px;top:328.00px;font-size:10.1px;font-weight:normal;color:#434549;">6m 37s</div>
<div class="t" style="left:616.00px;top:328.00px;font-size:10.1px;font-weight:normal;color:#434549;">6m 37s</div>
<div class="t" style="left:676.60px;top:328.00px;font-size:10.1px;font-weight:normal;color:#434549;">1m 37s</div>
<div class="t" style="left:742.80px;top:328.00px;font-size:10.1px;font-weight:normal;color:#434549;">1/3 (H)</div>
<div class="t" style="left:786.20px;top:328.00px;font-size:10.1px;font-weight:normal;color:#434549;letter-spacing:-0.085px;">OK: Load average: 0.00, 0.12, 0.16</div>
<div class="t" style="left:146.30px;top:352.00px;font-size:10.1px;font-weight:normal;color:#434549;letter-spacing:0.285px;">Memory-local</div>
<div class="t" style="left:100.00px;width:600px;text-align:center;top:351.00px;font-size:10.3px;font-weight:bold;color:#fff;transform:scaleX(0.88);transform-origin:50% 0;">OK</div>
<div class="t" style="left:474.80px;top:352.00px;font-size:10.1px;font-weight:normal;color:#434549;">6m 37s</div>
<div class="t" style="left:616.00px;top:352.00px;font-size:10.1px;font-weight:normal;color:#434549;">6m 37s</div>
<div class="t" style="left:676.60px;top:352.00px;font-size:10.1px;font-weight:normal;color:#434549;">1m 37s</div>
<div class="t" style="left:742.80px;top:352.00px;font-size:10.1px;font-weight:normal;color:#434549;">1/3 (H)</div>
<div class="t" style="left:786.20px;top:352.00px;font-size:10.1px;font-weight:normal;color:#434549;letter-spacing:-0.046px;">OK: Ram used (-buffers/cache) 738.02 MB (37.13%), Buffer: 221.42 MB, Cached: 931.56 MB</div>
<div class="t" style="left:146.30px;top:376.00px;font-size:10.1px;font-weight:normal;color:#434549;letter-spacing:-0.091px;">MySQLdatabases-size</div>
<div class="t" style="left:100.00px;width:600px;text-align:center;top:375.00px;font-size:9.4px;font-weight:normal;color:#5f5f5f;letter-spacing:-0.356px;">UNKNOWN</div>
<div class="t" style="left:474.80px;top:376.00px;font-size:10.1px;font-weight:normal;color:#434549;">6m 37s</div>
<div class="t" style="left:616.00px;top:376.00px;font-size:10.1px;font-weight:normal;color:#434549;">2m 37s</div>
<div class="t" style="left:676.60px;top:376.00px;font-size:10.1px;font-weight:normal;color:#434549;">2m 37s</div>
<div class="t" style="left:742.80px;top:376.00px;font-size:10.1px;font-weight:normal;color:#434549;">3/3 (H)</div>
<div class="t" style="left:786.20px;top:376.00px;font-size:10.1px;font-weight:normal;color:#434549;letter-spacing:0.231px;">Unknown option: warning at /usr/lib/centreon/plugins//centreon_mysql.pl line 616.</div>
<div class="t" style="left:146.30px;top:399.00px;font-size:10.1px;font-weight:normal;color:#434549;letter-spacing:0.069px;">MySQL_connection-time</div>
<div class="t" style="left:100.00px;width:600px;text-align:center;top:399.00px;font-size:10.3px;font-weight:bold;color:#fff;transform:scaleX(0.88);transform-origin:50% 0;">OK</div>
<div class="t" style="left:474.80px;top:399.00px;font-size:10.1px;font-weight:normal;color:#434549;">6m 37s</div>
<div class="t" style="left:616.00px;top:399.00px;font-size:10.1px;font-weight:normal;color:#434549;">6m 37s</div>
<div class="t" style="left:676.60px;top:399.00px;font-size:10.1px;font-weight:normal;color:#434549;">1m 37s</div>
<div class="t" style="left:742.80px;top:399.00px;font-size:10.1px;font-weight:normal;color:#434549;">1/3 (H)</div>
<div class="t" style="left:786.20px;top:399.00px;font-size:10.1px;font-weight:normal;color:#434549;letter-spacing:0.042px;">OK: Connection established in 0.122s.</div>
<div class="t" style="left:146.30px;top:423.00px;font-size:10.1px;font-weight:normal;color:#434549;letter-spacing:-0.007px;">MySQL_long-queries</div>
<div class="t" style="left:100.00px;width:600px;text-align:center;top:422.00px;font-size:10.3px;font-weight:bold;color:#fff;transform:scaleX(0.88);transform-origin:50% 0;">OK</div>
<div class="t" style="left:474.80px;top:423.00px;font-size:10.1px;font-weight:normal;color:#434549;">6m 37s</div>
<div class="t" style="left:616.00px;top:423.00px;font-size:10.1px;font-weight:normal;color:#434549;">6m 37s</div>
<div class="t" style="left:676.60px;top:423.00px;font-size:10.1px;font-weight:normal;color:#434549;">1m 37s</div>
<div class="t" style="left:742.80px;top:423.00px;font-size:10.1px;font-weight:normal;color:#434549;">1/3 (H)</div>
<div class="t" style="left:786.20px;top:423.00px;font-size:10.1px;font-weight:normal;color:#434549;letter-spacing:0.029px;">OK: 0 queries over 60 seconds</div>
<div class="t" style="left:146.30px;top:447.00px;font-size:10.1px;font-weight:normal;color:#434549;letter-spacing:-0.043px;">MySQL_open-files</div>
<div class="t" style="left:100.00px;width:600px;text-align:center;top:446.00px;font-size:10.3px;font-weight:bold;color:#fff;transform:scaleX(0.88);transform-origin:50% 0;">OK</div>
<div class="t" style="left:474.80px;top:447.00px;font-size:10.1px;font-weight:normal;color:#434549;">6m 37s</div>
<div class="t" style="left:616.00px;top:447.00px;font-size:10.1px;font-weight:normal;color:#434549;">6m 37s</div>
<div class="t" style="left:676.60px;top:447.00px;font-size:10.1px;font-weight:normal;color:#434549;">1m 37s</div>
<div class="t" style="left:742.80px;top:447.00px;font-size:10.1px;font-weight:normal;color:#434549;">1/3 (H)</div>
<div class="t" style="left:786.20px;top:447.00px;font-size:10.1px;font-weight:normal;color:#434549;letter-spacing:0.062px;">OK: 0.00% of the open files limit reached (56 of max. 32000)</div>
<div class="t" style="left:146.30px;top:470.00px;font-size:10.1px;font-weight:normal;color:#434549;letter-spacing:0.004px;">MySQL_qcache-hitrate</div>
<div class="t" style="left:100.00px;width:600px;text-align:center;top:470.00px;font-size:10.3px;font-weight:bold;color:#fff;transform:scaleX(0.88);transform-origin:50% 0;">OK</div>
<div class="t" style="left:474.80px;top:470.00px;font-size:10.1px;font-weight:normal;color:#434549;">6m 37s</div>
<div class="t" style="left:616.00px;top:470.00px;font-size:10.1px;font-weight:normal;color:#434549;">6m 37s</div>
<div class="t" style="left:676.60px;top:470.00px;font-size:10.1px;font-weight:normal;color:#434549;">1m 37s</div>
<div class="t" style="left:742.80px;top:470.00px;font-size:10.1px;font-weight:normal;color:#434549;">1/3 (H)</div>
<div class="t" style="left:786.20px;top:470.00px;font-size:10.1px;font-weight:normal;color:#434549;letter-spacing:0.028px;">OK: query cache hitrate at 41.63%</div>
<div class="t" style="left:146.30px;top:494.00px;font-size:10.1px;font-weight:normal;color:#434549;letter-spacing:-0.080px;">MySQL_queries</div>
<div class="t" style="left:100.00px;width:600px;text-align:center;top:494.00px;font-size:10.3px;font-weight:bold;color:#fff;transform:scaleX(0.88);transform-origin:50% 0;">OK</div>
<div class="t" style="left:474.80px;top:494.00px;font-size:10.1px;font-weight:normal;color:#434549;">6m 37s</div>
<div class="t" style="left:616.00px;top:494.00px;font-size:10.1px;font-weight:normal;color:#434549;">6m 37s</div>
<div class="t" style="left:676.60px;top:494.00px;font-size:10.1px;font-weight:normal;color:#434549;">1m 37s</div>
<div class="t" style="left:742.80px;top:494.00px;font-size:10.1px;font-weight:normal;color:#434549;">1/3 (H)</div>
<div class="t" style="left:786.20px;top:494.00px;font-size:10.1px;font-weight:normal;color:#434549;letter-spacing:-0.019px;">OK: Requests Total : 12</div>
<div class="t" style="left:146.30px;top:518.00px;font-size:10.1px;font-weight:normal;color:#434549;letter-spacing:-0.025px;">MySQL_slow-queries</div>
<div class="t" style="left:100.00px;width:600px;text-align:center;top:517.00px;font-size:10.3px;font-weight:bold;color:#fff;transform:scaleX(0.88);transform-origin:50% 0;">OK</div>
<div class="t" style="left:474.80px;top:518.00px;font-size:10.1px;font-weight:normal;color:#434549;">6m 37s</div>
<div class="t" style="left:616.00px;top:518.00px;font-size:10.1px;font-weight:normal;color:#434549;">6m 37s</div>
<div class="t" style="left:676.60px;top:518.00px;font-size:10.1px;font-weight:normal;color:#434549;">1m 37s</div>
<div class="t" style="left:742.80px;top:518.00px;font-size:10.1px;font-weight:normal;color:#434549;">1/3 (H)</div>
<div class="t" style="left:786.20px;top:518.00px;font-size:10.1px;font-weight:normal;color:#434549;letter-spacing:-0.007px;">OK: 0 slow queries in 300 seconds (0.00/sec)</div>
<div class="t" style="left:146.30px;top:542.00px;font-size:10.1px;font-weight:normal;color:#434549;letter-spacing:0.042px;">MySQL_threads-connected</div>
<div class="t" style="left:100.00px;width:600px;text-align:center;top:541.00px;font-size:10.3px;font-weight:bold;color:#fff;transform:scaleX(0.88);transform-origin:50% 0;">OK</div>
<div class="t" style="left:474.80px;top:542.00px;font-size:10.1px;font-weight:normal;color:#434549;">6m 37s</div>
<div class="t" style="left:616.00px;top:542.00px;font-size:10.1px;font-weight:normal;color:#434549;">6m 37s</div>
<div class="t" style="left:676.60px;top:542.00px;font-size:10.1px;font-weight:normal;color:#434549;">1m 37s</div>
<div class="t" style="left:742.80px;top:542.00px;font-size:10.1px;font-weight:normal;color:#434549;">1/3 (H)</div>
<div class="t" style="left:786.20px;top:542.00px;font-size:10.1px;font-weight:normal;color:#434549;letter-spacing:-0.049px;">OK: Client Connection Threads Total: 151 Used: 6 (3.97%) Free: 145 (96.03%)</div>
<div class="t" style="left:146.30px;top:565.00px;font-size:10.1px;font-weight:normal;color:#434549;letter-spacing:0.013px;">MySQL_uptime</div>
<div class="t" style="left:100.00px;width:600px;text-align:center;top:565.00px;font-size:10.3px;font-weight:bold;color:#fff;transform:scaleX(0.88);transform-origin:50% 0;">OK</div>
<div class="t" style="left:474.80px;top:565.00px;font-size:10.1px;font-weight:normal;color:#434549;">6m 37s</div>
<div class="t" style="left:616.00px;top:565.00px;font-size:10.1px;font-weight:normal;color:#434549;">6m 37s</div>
<div class="t" style="left:676.60px;top:565.00px;font-size:10.1px;font-weight:normal;color:#434549;">1m 37s</div>
<div class="t" style="left:742.80px;top:565.00px;font-size:10.1px;font-weight:normal;color:#434549;">1/3 (H)</div>
<div class="t" style="left:786.20px;top:565.00px;font-size:10.1px;font-weight:normal;color:#434549;letter-spacing:-0.029px;">OK: database is up since 0 days</div>
<div class="t" style="left:146.30px;top:589.00px;font-size:10.1px;font-weight:normal;color:#434549;letter-spacing:-0.014px;">Ping-Lan</div>
<div class="t" style="left:100.00px;width:600px;text-align:center;top:588.00px;font-size:10.3px;font-weight:bold;color:#fff;transform:scaleX(0.88);transform-origin:50% 0;">OK</div>
<div class="t" style="left:474.80px;top:589.00px;font-size:10.1px;font-weight:normal;color:#434549;">6m 37s</div>
<div class="t" style="left:616.00px;top:589.00px;font-size:10.1px;font-weight:normal;color:#434549;">6m 37s</div>
<div class="t" style="left:676.60px;top:589.00px;font-size:10.1px;font-weight:normal;color:#434549;">1m 37s</div>
<div class="t" style="left:742.80px;top:589.00px;font-size:10.1px;font-weight:normal;color:#434549;">1/3 (H)</div>
<div class="t" style="left:786.20px;top:589.00px;font-size:10.1px;font-weight:normal;color:#434549;letter-spacing:-0.044px;">OK - 127.0.0.1: rta 0,004ms, lost 0%</div>
<div class="t" style="left:146.30px;top:613.00px;font-size:10.1px;font-weight:normal;color:#434549;letter-spacing:0.229px;">process-broker-rrd</div>
<div class="t" style="left:100.00px;width:600px;text-align:center;top:612.00px;font-size:10.3px;font-weight:bold;color:#fff;transform:scaleX(0.88);transform-origin:50% 0;">OK</div>
<div class="t" style="left:474.80px;top:613.00px;font-size:10.1px;font-weight:normal;color:#434549;">7m 58s</div>
<div class="t" style="left:616.00px;top:613.00px;font-size:10.1px;font-weight:normal;color:#434549;">7m 58s</div>
<div class="t" style="left:676.60px;top:613.00px;font-size:10.1px;font-weight:normal;color:#434549;">1m 37s</div>
<div class="t" style="left:742.80px;top:613.00px;font-size:10.1px;font-weight:normal;color:#434549;">1/3 (H)</div>
<div class="t" style="left:786.20px;top:613.00px;font-size:10.1px;font-weight:normal;color:#434549;letter-spacing:0.133px;">OK: Number of current processes running: 1</div>
<div class="t" style="left:146.30px;top:637.00px;font-size:10.1px;font-weight:normal;color:#434549;letter-spacing:0.195px;">process-broker-sql</div>
<div class="t" style="left:100.00px;width:600px;text-align:center;top:636.00px;font-size:10.3px;font-weight:bold;color:#fff;transform:scaleX(0.88);transform-origin:50% 0;">OK</div>
<div class="t" style="left:474.80px;top:637.00px;font-size:10.1px;font-weight:normal;color:#434549;">7m 46s</div>
<div class="t" style="left:616.00px;top:637.00px;font-size:10.1px;font-weight:normal;color:#434549;">7m 46s</div>
<div class="t" style="left:676.60px;top:637.00px;font-size:10.1px;font-weight:normal;color:#434549;">1m 37s</div>
<div class="t" style="left:742.80px;top:637.00px;font-size:10.1px;font-weight:normal;color:#434549;">1/3 (H)</div>
<div class="t" style="left:786.20px;top:637.00px;font-size:10.1px;font-weight:normal;color:#434549;letter-spacing:0.133px;">OK: Number of current processes running: 1</div>
<div class="t" style="left:146.30px;top:660.00px;font-size:10.1px;font-weight:normal;color:#434549;letter-spacing:0.146px;">process-centcore</div>
<div class="t" style="left:100.00px;width:600px;text-align:center;top:660.00px;font-size:10.3px;font-weight:bold;color:#fff;transform:scaleX(0.88);transform-origin:50% 0;">OK</div>
<div class="t" style="left:474.80px;top:660.00px;font-size:10.1px;font-weight:normal;color:#434549;">7m 34s</div>
<div class="t" style="left:616.00px;top:660.00px;font-size:10.1px;font-weight:normal;color:#434549;">7m 34s</div>
<div class="t" style="left:676.60px;top:660.00px;font-size:10.1px;font-weight:normal;color:#434549;">1m 37s</div>
<div class="t" style="left:742.80px;top:660.00px;font-size:10.1px;font-weight:normal;color:#434549;">1/3 (H)</div>
<div class="t" style="left:786.20px;top:660.00px;font-size:10.1px;font-weight:normal;color:#434549;letter-spacing:0.133px;">OK: Number of current processes running: 1</div>
<div class="t" style="left:146.30px;top:684.00px;font-size:10.1px;font-weight:normal;color:#434549;letter-spacing:0.115px;">process-cron</div>
<div class="t" style="left:100.00px;width:600px;text-align:center;top:683.00px;font-size:10.3px;font-weight:bold;color:#fff;transform:scaleX(0.88);transform-origin:50% 0;">OK</div>
<div class="t" style="left:474.80px;top:684.00px;font-size:10.1px;font-weight:normal;color:#434549;">7m 22s</div>
<div class="t" style="left:616.00px;top:684.00px;font-size:10.1px;font-weight:normal;color:#434549;">7m 22s</div>
<div class="t" style="left:676.60px;top:684.00px;font-size:10.1px;font-weight:normal;color:#434549;">1m 37s</div>
<div class="t" style="left:742.80px;top:684.00px;font-size:10.1px;font-weight:normal;color:#434549;">1/3 (H)</div>
<div class="t" style="left:786.20px;top:684.00px;font-size:10.1px;font-weight:normal;color:#434549;letter-spacing:0.133px;">OK: Number of current processes running: 1</div>
<div class="t" style="left:146.30px;top:708.00px;font-size:10.1px;font-weight:normal;color:#434549;letter-spacing:0.092px;">process-engine</div>
<div class="t" style="left:100.00px;width:600px;text-align:center;top:707.00px;font-size:10.3px;font-weight:bold;color:#fff;transform:scaleX(0.88);transform-origin:50% 0;">OK</div>
<div class="t" style="left:474.80px;top:708.00px;font-size:10.1px;font-weight:normal;color:#434549;">6m 46s</div>
<div class="t" style="left:616.00px;top:708.00px;font-size:10.1px;font-weight:normal;color:#434549;">6m 46s</div>
<div class="t" style="left:676.60px;top:708.00px;font-size:10.1px;font-weight:normal;color:#434549;">1m 37s</div>
<div class="t" style="left:742.80px;top:708.00px;font-size:10.1px;font-weight:normal;color:#434549;">1/3 (H)</div>
<div class="t" style="left:786.20px;top:708.00px;font-size:10.1px;font-weight:normal;color:#434549;letter-spacing:0.133px;">OK: Number of current processes running: 1</div>
<div class="t" style="left:146.30px;top:732.00px;font-size:10.1px;font-weight:normal;color:#434549;letter-spacing:0.223px;">process-ntpd</div>
<div class="t" style="left:100.00px;width:600px;text-align:center;top:731.00px;font-size:10.3px;font-weight:bold;color:#fff;transform:scaleX(0.88);transform-origin:50% 0;">OK</div>
<div class="t" style="left:474.80px;top:732.00px;font-size:10.1px;font-weight:normal;color:#434549;">6m 58s</div>
<div class="t" style="left:616.00px;top:732.00px;font-size:10.1px;font-weight:normal;color:#434549;">6m 58s</div>
<div class="t" style="left:676.60px;top:732.00px;font-size:10.1px;font-weight:normal;color:#434549;">1m 37s</div>
<div class="t" style="left:742.80px;top:732.00px;font-size:10.1px;font-weight:normal;color:#434549;">1/3 (H)</div>
<div class="t" style="left:786.20px;top:732.00px;font-size:10.1px;font-weight:normal;color:#434549;letter-spacing:0.133px;">OK: Number of current processes running: 1</div>
<div class="t" style="left:146.30px;top:755.00px;font-size:10.1px;font-weight:normal;color:#434549;letter-spacing:0.043px;">process-sshd</div>
<div class="t" style="left:100.00px;width:600px;text-align:center;top:754.00px;font-size:10.3px;font-weight:bold;color:#fff;transform:scaleX(0.88);transform-origin:50% 0;">OK</div>
<div class="t" style="left:474.80px;top:755.00px;font-size:10.1px;font-weight:normal;color:#434549;">7m 10s</div>
<div class="t" style="left:616.00px;top:755.00px;font-size:10.1px;font-weight:normal;color:#434549;">7m 10s</div>
<div class="t" style="left:676.60px;top:755.00px;font-size:10.1px;font-weight:normal;color:#434549;">1m 37s</div>
<div class="t" style="left:742.80px;top:755.00px;font-size:10.1px;font-weight:normal;color:#434549;">1/3 (H)</div>
<div class="t" style="left:786.20px;top:755.00px;font-size:10.1px;font-weight:normal;color:#434549;letter-spacing:0.150px;">OK: Number of current processes running: 5</div>
<div class="t" style="left:146.30px;top:779.00px;font-size:10.1px;font-weight:normal;color:#434549;letter-spacing:0.172px;">Storage-/</div>
<div class="t" style="left:100.00px;width:600px;text-align:center;top:778.00px;font-size:10.3px;font-weight:bold;color:#fff;transform:scaleX(0.88);transform-origin:50% 0;">OK</div>
<div class="t" style="left:474.80px;top:779.00px;font-size:10.1px;font-weight:normal;color:#434549;">6m 37s</div>
<div class="t" style="left:616.00px;top:779.00px;font-size:10.1px;font-weight:normal;color:#434549;">6m 37s</div>
<div class="t" style="left:676.60px;top:779.00px;font-size:10.1px;font-weight:normal;color:#434549;">1m 37s</div>
<div class="t" style="left:742.80px;top:779.00px;font-size:10.1px;font-weight:normal;color:#434549;">1/3 (H)</div>
<div class="t" style="left:786.20px;top:779.00px;font-size:10.1px;font-weight:normal;color:#434549;letter-spacing:-0.129px;">OK: Storage &#x27;/&#x27; Usage Total: 19.56 GB Used: 5.84 GB (29.88%) Free: 13.72 GB (70.12%)</div>
<div class="t" style="left:146.30px;top:803.00px;font-size:10.1px;font-weight:normal;color:#434549;letter-spacing:0.236px;">Storage-/boot</div>
<div class="t" style="left:100.00px;width:600px;text-align:center;top:802.00px;font-size:10.3px;font-weight:bold;color:#fff;transform:scaleX(0.88);transform-origin:50% 0;">OK</div>
<div class="t" style="left:474.80px;top:803.00px;font-size:10.1px;font-weight:normal;color:#434549;">6m 37s</div>
<div class="t" style="left:616.00px;top:803.00px;font-size:10.1px;font-weight:normal;color:#434549;">6m 37s</div>
<div class="t" style="left:676.60px;top:803.00px;font-size:10.1px;font-weight:normal;color:#434549;">1m 37s</div>
<div class="t" style="left:742.80px;top:803.00px;font-size:10.1px;font-weight:normal;color:#434549;">1/3 (H)</div>
<div class="t" style="left:786.20px;top:803.00px;font-size:10.1px;font-weight:normal;color:#434549;letter-spacing:-0.050px;">OK: Storage &#x27;/boot&#x27; Usage Total: 975.90 MB Used: 98.80 MB (10.12%) Free: 877.10 MB (89.88%)</div>
<div class="t" style="left:146.30px;top:826.00px;font-size:10.1px;font-weight:normal;color:#434549;letter-spacing:0.211px;">Storage-/home</div>
<div class="t" style="left:100.00px;width:600px;text-align:center;top:826.00px;font-size:10.3px;font-weight:bold;color:#fff;transform:scaleX(0.88);transform-origin:50% 0;">OK</div>
<div class="t" style="left:474.80px;top:826.00px;font-size:10.1px;font-weight:normal;color:#434549;">6m 37s</div>
<div class="t" style="left:616.00px;top:826.00px;font-size:10.1px;font-weight:normal;color:#434549;">6m 37s</div>
<div class="t" style="left:676.60px;top:826.00px;font-size:10.1px;font-weight:normal;color:#434549;">1m 37s</div>
<div class="t" style="left:742.80px;top:826.00px;font-size:10.1px;font-weight:normal;color:#434549;">1/3 (H)</div>
<div class="t" style="left:786.20px;top:826.00px;font-size:10.1px;font-weight:normal;color:#434549;letter-spacing:-0.102px;">OK: Storage &#x27;/home&#x27; Usage Total: 7.81 GB Used: 1.20 GB (15.38%) Free: 6.61 GB (84.62%)</div>
<div class="t" style="left:146.30px;top:850.00px;font-size:10.1px;font-weight:normal;color:#434549;letter-spacing:0.026px;">Swap-local</div>
<div class="t" style="left:100.00px;width:600px;text-align:center;top:849.00px;font-size:9.4px;font-weight:normal;color:#5f5f5f;letter-spacing:-0.356px;">UNKNOWN</div>
<div class="t" style="left:474.80px;top:850.00px;font-size:10.1px;font-weight:normal;color:#434549;">6m 37s</div>
<div class="t" style="left:616.00px;top:850.00px;font-size:10.1px;font-weight:normal;color:#434549;">2m 37s</div>
<div class="t" style="left:676.60px;top:850.00px;font-size:10.1px;font-weight:normal;color:#434549;">2m 37s</div>
<div class="t" style="left:742.80px;top:850.00px;font-size:10.1px;font-weight:normal;color:#434549;">3/3 (H)</div>
<div class="t" style="left:786.20px;top:850.00px;font-size:10.1px;font-weight:normal;color:#434549;letter-spacing:0.204px;">Unknown option: warning at /usr/lib/centreon/plugins//centreon_linux_local.pl line 141.</div>
<div class="t" style="left:66.20px;top:880.00px;font-size:10.5px;font-weight:normal;color:#2a2a2a;">More actions...</div>
<div class="t" style="left:1330.00px;top:880.00px;font-size:10.5px;font-weight:normal;color:#2a2a2a;">30</div>
<div class="t" style="left:60.70px;top:31.00px;font-size:9.6px;font-weight:normal;color:#ffffff;letter-spacing:0.133px;-webkit-text-stroke:0.15px #fff;">pollers</div>
<div class="t" style="left:799.80px;top:33.00px;font-size:9.83px;font-weight:normal;color:#ffffff;letter-spacing:0.221px;-webkit-text-stroke:0.15px #fff;">hosts</div>
<div class="t" style="left:969.80px;top:33.00px;font-size:9.62px;font-weight:normal;color:#ffffff;letter-spacing:0.131px;-webkit-text-stroke:0.15px #fff;">services</div>
<div class="t" style="left:551.30px;width:600px;text-align:center;top:20.00px;font-size:12.5px;font-weight:bold;color:#fff;">0</div>
<div class="t" style="left:587.30px;width:600px;text-align:center;top:20.00px;font-size:12.5px;font-weight:bold;color:#fff;">0</div>
<div class="t" style="left:623.00px;width:600px;text-align:center;top:20.00px;font-size:12.5px;font-weight:bold;color:#fff;">1</div>
<div class="t" style="left:735.00px;width:600px;text-align:center;top:20.00px;font-size:12.5px;font-weight:bold;color:#fff;">0</div>
<div class="t" style="left:774.60px;width:600px;text-align:center;top:20.00px;font-size:12.5px;font-weight:bold;color:#fff;">0</div>
<div class="t" style="left:813.50px;width:600px;text-align:center;top:20.00px;font-size:12.5px;font-weight:bold;color:#fff;">2</div>
<div class="t" style="left:853.60px;width:600px;text-align:center;top:20.00px;font-size:12.5px;font-weight:bold;color:#fff;">23</div>
<div class="t" style="left:1224.00px;top:9.00px;font-size:12.4px;font-weight:normal;color:#f4f6f8;letter-spacing:-0.443px;">January 13, 2020</div>
<div class="t" style="left:1224.00px;top:27.00px;font-size:14.4px;font-weight:normal;color:#f4f6f8;letter-spacing:-0.216px;">6:59 PM</div>
</div>
</body></html>
